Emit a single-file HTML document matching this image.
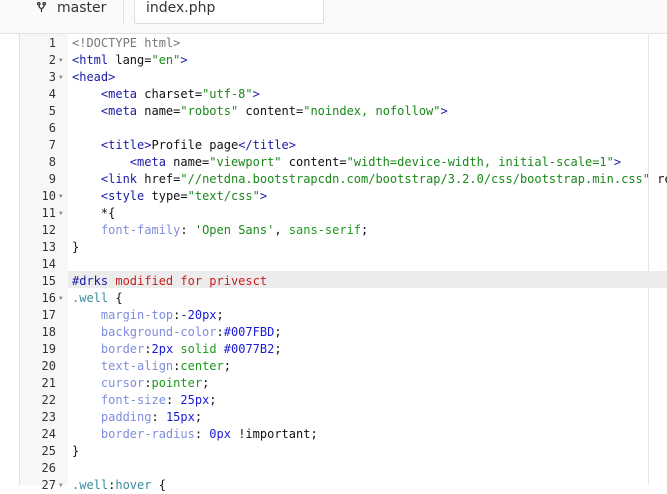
<!DOCTYPE html>
<html><head><style>
body{margin:0;width:667px;height:485px;overflow:hidden;background:#fff;font-family:"DejaVu Sans Mono","Liberation Mono",monospace;position:relative}
.hdr{position:absolute;left:0;top:0;width:667px;height:33px;background:#fafafa;border-bottom:1px solid #e3e3e3}
.br{position:absolute;left:57px;top:0;font:14px "DejaVu Sans",sans-serif;color:#333;line-height:16px}
.sep{position:absolute;left:123px;top:0;width:1px;height:25px;background:#e3e3e3}
.tab{position:absolute;left:134px;top:-1px;width:190px;height:25px;background:#fff;border:1px solid #ddd;border-radius:0 0 2px 2px;font:14px "DejaVu Sans",sans-serif;color:#333;padding-left:11px;box-sizing:border-box;line-height:16px}
.lb{position:absolute;left:19px;top:34px;width:1px;height:451px;background:#e0e0e0}
.gut{position:absolute;left:20px;top:34px;width:48px;height:451px;background:#f7f7f7}
.pm{position:absolute;left:648px;top:34px;width:1px;height:451px;background:#e6e6e6}
.act{position:absolute;left:68px;top:271px;width:599px;height:17px;background:#ececec}
.ln{position:absolute;left:20px;top:35px;width:36px;text-align:right;font-size:12px;line-height:17px;color:#333}
.fd{position:absolute;left:59px;top:35px;font-size:6px;line-height:17px;color:#888}
.code{position:absolute;left:72px;top:35px;font-size:12px;line-height:17px;white-space:pre;color:#111}
.d{color:#777}.t{color:#1a1aa6}.s{color:#1a881a}.p{color:#7f8ddc}.n{color:#1c1cd8}.k{color:#1d9a1d}.c{color:#3a8d9c}.r{color:#cc2020}
</style></head><body>
<div class="hdr"></div>
<svg style="position:absolute;left:37px;top:2px" width="9" height="11" viewBox="0 0 9 11"><g fill="none" stroke="#333" stroke-width="1.3"><circle cx="1.8" cy="1.8" r="1.2"/><circle cx="7.2" cy="1.8" r="1.2"/><path d="M1.8 3 Q2 6 4.5 6.5 Q7 6 7.2 3 M4.5 6.5 V10"/></g></svg>
<div class="br">master</div>
<div class="sep"></div>
<div class="tab">index.php</div>
<div class="lb"></div><div class="gut"></div><div class="pm"></div><div class="act"></div>
<div class="ln">1<br>2<br>3<br>4<br>5<br>6<br>7<br>8<br>9<br>10<br>11<br>12<br>13<br>14<br>15<br>16<br>17<br>18<br>19<br>20<br>21<br>22<br>23<br>24<br>25<br>26<br>27</div>
<div class="fd"><br>▼<br>▼<br><br><br><br><br><br><br>▼<br>▼<br><br><br><br><br>▼<br><br><br><br><br><br><br><br><br><br><br>▼</div>
<div class="code"><span class="d">&lt;!DOCTYPE html&gt;</span>
<span class="t">&lt;html</span> lang=<span class="s">"en"</span><span class="t">&gt;</span>
<span class="t">&lt;head&gt;</span>
    <span class="t">&lt;meta</span> charset=<span class="s">"utf-8"</span><span class="t">&gt;</span>
    <span class="t">&lt;meta</span> name=<span class="s">"robots"</span> content=<span class="s">"noindex, nofollow"</span><span class="t">&gt;</span>

    <span class="t">&lt;title&gt;</span>Profile page<span class="t">&lt;/title&gt;</span>
        <span class="t">&lt;meta</span> name=<span class="s">"viewport"</span> content=<span class="s">"width=device-width, initial-scale=1"</span><span class="t">&gt;</span>
    <span class="t">&lt;link</span> href=<span class="s">"//netdna.bootstrapcdn.com/bootstrap/3.2.0/css/bootstrap.min.css"</span> rel
    <span class="t">&lt;style</span> type=<span class="s">"text/css"</span><span class="t">&gt;</span>
    *{
    <span class="p">font-family</span>: <span class="s">'Open Sans'</span>, <span class="k">sans-serif</span>;
}

<span class="t">#drks</span> <span class="r">modified for privesct</span>
<span class="c">.well</span> {
    <span class="p">margin-top</span>:<span class="n">-20px</span>;
    <span class="p">background-color</span>:<span class="n">#007FBD</span>;
    <span class="p">border</span>:<span class="n">2px</span> <span class="k">solid</span> <span class="n">#0077B2</span>;
    <span class="p">text-align</span>:<span class="k">center</span>;
    <span class="p">cursor</span>:<span class="k">pointer</span>;
    <span class="p">font-size</span>: <span class="n">25px</span>;
    <span class="p">padding</span>: <span class="n">15px</span>;
    <span class="p">border-radius</span>: <span class="n">0px</span> !important;
}

<span class="c">.well</span>:<span class="c">hover</span> {</div>
</body></html>
